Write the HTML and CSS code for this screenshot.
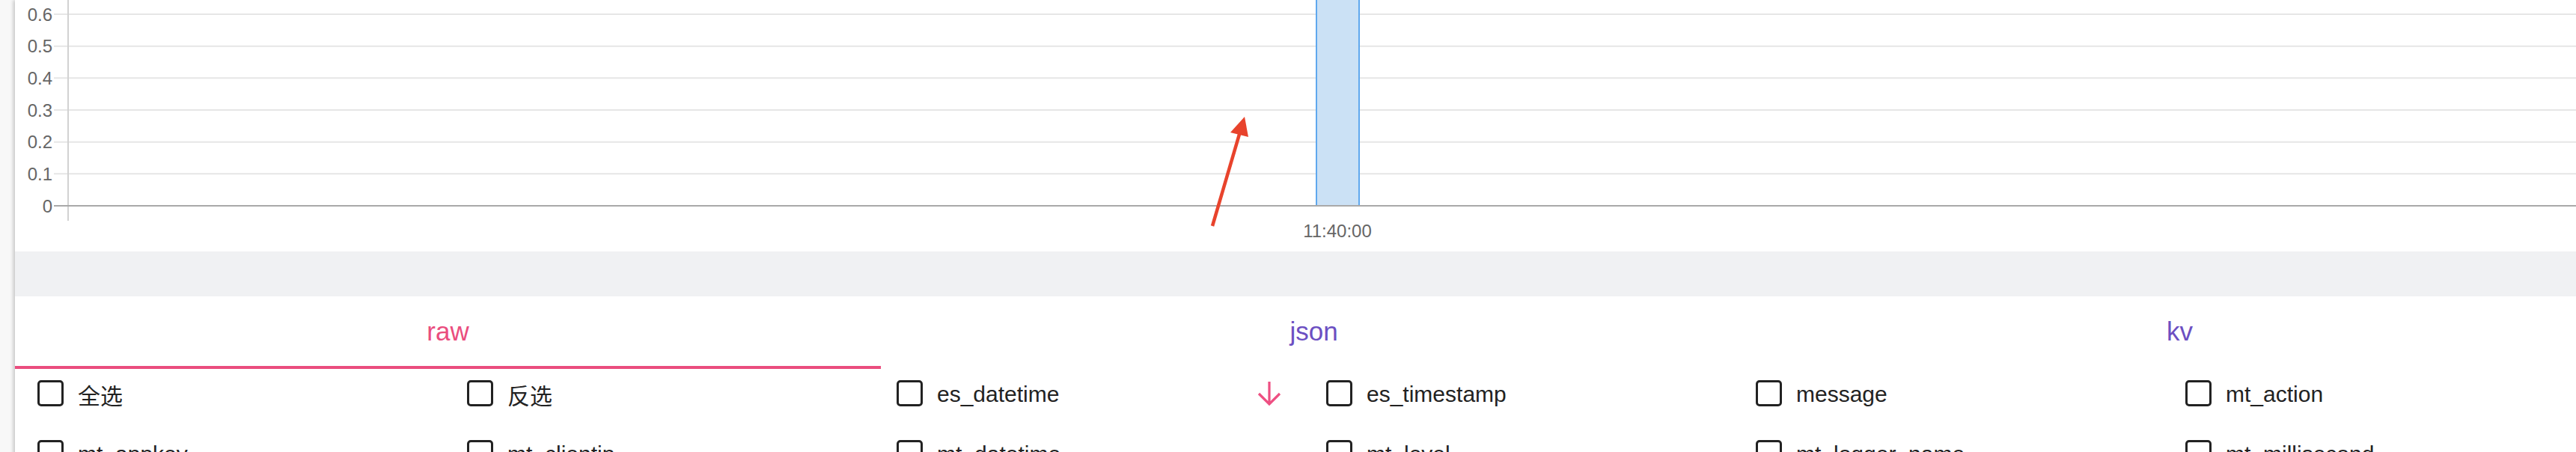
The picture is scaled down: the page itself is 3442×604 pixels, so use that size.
FILE: index.html
```html
<!DOCTYPE html>
<html lang="zh">
<head>
<meta charset="utf-8">
<title>Log fields</title>
<link rel="stylesheet" href="styles.css">
</head>
<body>
<div class="panel">
  <div class="chart">
    <svg class="chart-svg" width="3471" height="336" viewBox="20 0 3471 336" xmlns="http://www.w3.org/2000/svg">
      <g class="grid">
        <line x1="72" y1="19" x2="3491" y2="19"/>
        <line x1="72" y1="61.7" x2="3491" y2="61.7"/>
        <line x1="72" y1="104.3" x2="3491" y2="104.3"/>
        <line x1="72" y1="147" x2="3491" y2="147"/>
        <line x1="72" y1="189.7" x2="3491" y2="189.7"/>
        <line x1="72" y1="232.3" x2="3491" y2="232.3"/>
      </g>
      <line class="yaxis" x1="91" y1="0" x2="91" y2="295"/>
      <rect class="bar" x="1759" y="-4" width="57" height="279"/>
      <line class="xaxis" x1="72" y1="275" x2="3491" y2="275"/>
      <g class="ylabels">
        <text x="70" y="19">0.6</text>
        <text x="70" y="61.7">0.5</text>
        <text x="70" y="104.3">0.4</text>
        <text x="70" y="147">0.3</text>
        <text x="70" y="189.7">0.2</text>
        <text x="70" y="232.3">0.1</text>
        <text x="70" y="275">0</text>
      </g>
      <text class="xlabel" x="1787" y="308">11:40:00</text>
      <g class="annot">
        <line x1="1620" y1="302" x2="1657" y2="176"/>
        <polygon points="1663,156 1644,177 1668,183"/>
      </g>
    </svg>
  </div>
  <div class="band"></div>
  <div class="tabs">
    <div class="tab tab-active">raw</div>
    <div class="tab">json</div>
    <div class="tab">kv</div>
  </div>
  <div class="fields">
    <label class="field"><span class="box"></span><span class="name">全选</span></label>
    <label class="field"><span class="box"></span><span class="name">反选</span></label>
    <label class="field field-sorted"><span class="box"></span><span class="name">es_datetime</span>
      <svg class="sort" width="32" height="34" viewBox="0 0 32 34" xmlns="http://www.w3.org/2000/svg"><path d="M16 1 V31 M2 17 L16 31 L30 17"/></svg>
    </label>
    <label class="field"><span class="box"></span><span class="name">es_timestamp</span></label>
    <label class="field"><span class="box"></span><span class="name">message</span></label>
    <label class="field"><span class="box"></span><span class="name">mt_action</span></label>
    <label class="field"><span class="box"></span><span class="name">mt_appkey</span></label>
    <label class="field"><span class="box"></span><span class="name">mt_clientip</span></label>
    <label class="field"><span class="box"></span><span class="name">mt_datetime</span></label>
    <label class="field"><span class="box"></span><span class="name">mt_level</span></label>
    <label class="field"><span class="box"></span><span class="name">mt_logger_name</span></label>
    <label class="field"><span class="box"></span><span class="name">mt_millisecond</span></label>
  </div>
</div>
</body>
</html>
```
FILE: styles.css
```css
html, body {
  margin: 0;
  padding: 0;
}
body {
  width: 3442px;
  height: 604px;
  overflow: hidden;
  background: #f8f8f8;
  font-family: "Liberation Sans", Arial, "Noto Sans CJK SC", sans-serif;
}
.panel {
  margin-left: 20px;
  width: 3471px;
  min-height: 700px;
  background: #fff;
  box-shadow: -2px 0 5px rgba(0, 0, 0, 0.22);
}
.chart {
  height: 336px;
}
.chart-svg {
  display: block;
}
.grid line {
  stroke: #e6e6e6;
  stroke-width: 2;
}
.yaxis {
  stroke: #d2d2d2;
  stroke-width: 2;
}
.xaxis {
  stroke: #a9a9a9;
  stroke-width: 2;
}
.bar {
  fill: #cbe1f5;
  stroke: #5fa8ee;
  stroke-width: 2;
}
.ylabels text {
  font-family: "Liberation Sans", Arial, sans-serif;
  font-size: 24px;
  fill: #666;
  text-anchor: end;
  dominant-baseline: central;
}
.xlabel {
  font-family: "Liberation Sans", Arial, sans-serif;
  font-size: 24px;
  fill: #666;
  text-anchor: middle;
  dominant-baseline: central;
}
.annot line {
  stroke: #e8432c;
  stroke-width: 4.5;
}
.annot polygon {
  fill: #e8432c;
}
.band {
  height: 60px;
  background: #f0f1f3;
}
.tabs {
  display: grid;
  grid-template-columns: repeat(3, 1157px);
}
.tab {
  height: 92px;
  border-bottom: 4px solid transparent;
  display: flex;
  align-items: center;
  justify-content: center;
  padding-top: 1px;
  box-sizing: content-box;
  font-size: 35px;
  color: #6c4fc2;
}
.tab-active {
  color: #ea4d7e;
  border-bottom-color: #ea4d7e;
}
.fields {
  display: grid;
  grid-template-columns: repeat(6, 574px);
  row-gap: 39px;
  padding: 12px 0 0 30px;
}
.field {
  display: flex;
  align-items: center;
  gap: 19px;
  height: 41px;
  padding-right: 60px;
}
.box {
  flex: none;
  width: 29px;
  height: 29px;
  border: 3.5px solid #222;
  border-radius: 5px;
}
.name {
  font-size: 30px;
  color: #222;
  padding-top: 2px;
  white-space: nowrap;
}
.sort {
  margin-left: auto;
  flex: none;
}
.sort path {
  fill: none;
  stroke: #ee4f82;
  stroke-width: 3.2;
}
```
